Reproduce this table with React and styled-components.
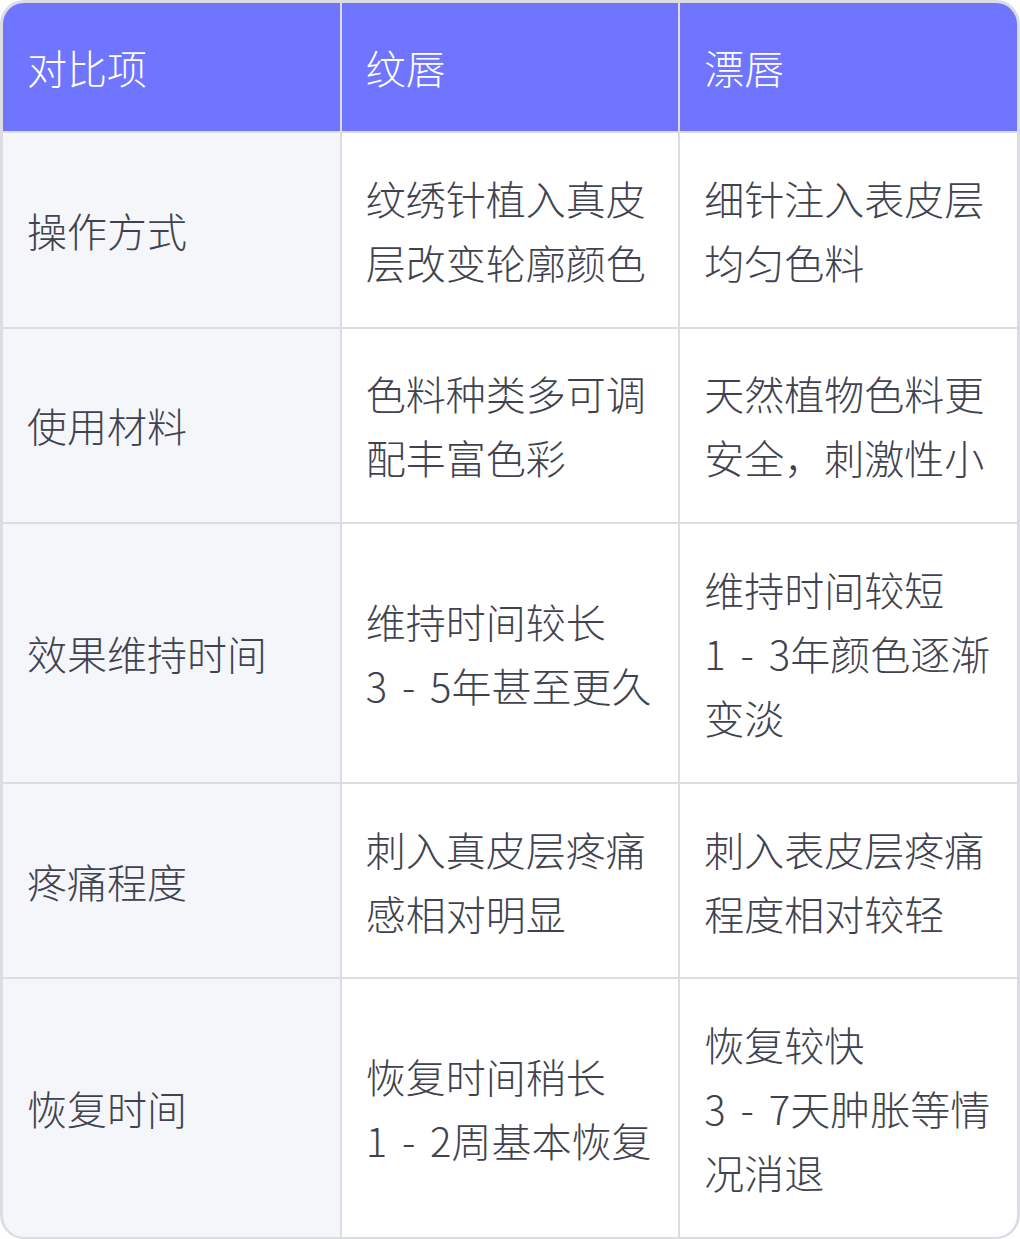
import React from 'react'
import styled, { createGlobalStyle } from 'styled-components'

const GlobalStyle = createGlobalStyle`
  html, body {
    margin: 0;
    padding: 0;
    background: #ffffff;
  }
  body {
    font-family: "Noto Sans CJK SC Light", "Noto Sans CJK SC DemiLight", "Noto Sans CJK SC", "Noto Sans", sans-serif;
  }
`

const columns = ['对比项', '纹唇', '漂唇']

const rows = [
  ['操作方式', '纹绣针植入真皮\n层改变轮廓颜色', '细针注入表皮层\n均匀色料'],
  ['使用材料', '色料种类多可调\n配丰富色彩', '天然植物色料更\n安全，刺激性小'],
  ['效果维持时间', '维持时间较长\n3 - 5年甚至更久', '维持时间较短\n1 - 3年颜色逐渐\n变淡'],
  ['疼痛程度', '刺入真皮层疼痛\n感相对明显', '刺入表皮层疼痛\n程度相对较轻'],
  ['恢复时间', '恢复时间稍长\n1 - 2周基本恢复', '恢复较快\n3 - 7天肿胀等情\n况消退'],
]

function App() {
  return (
    <>
      <GlobalStyle />
      <Table>
        {columns.map((c) => (
          <HeadCell key={c}>{c}</HeadCell>
        ))}
        {rows.map((row) =>
          row.map((text, i) => (
            <Cell key={row[0] + i} $label={i === 0}>
              <CellText>{text}</CellText>
            </Cell>
          ))
        )}
      </Table>
    </>
  )
}

export default App

const Table = styled.div`
  width: 1020px;
  box-sizing: border-box;
  display: grid;
  grid-template-columns: repeat(3, 1fr);
  gap: 2px;
  background: #dcdde3;
  border: 3px solid #dcdde3;
  border-bottom-width: 2px;
  border-radius: 24px;
  overflow: hidden;
`

const HeadCell = styled.div`
  background: #7075ff;
  color: #ffffff;
  font-size: 40px;
  line-height: 64px;
  font-weight: 300;
  padding: 32px 24px;
  white-space: nowrap;
`

const Cell = styled.div`
  display: flex;
  align-items: center;
  background: ${(p) => (p.$label ? '#f5f6fa' : '#ffffff')};
  padding: 32.8px 24px;
  min-width: 0;
`

const CellText = styled.div`
  color: #40434f;
  font-size: 40px;
  line-height: 64px;
  font-weight: 300;
  word-spacing: 6px;
  white-space: pre-line;
  word-break: keep-all;
`
